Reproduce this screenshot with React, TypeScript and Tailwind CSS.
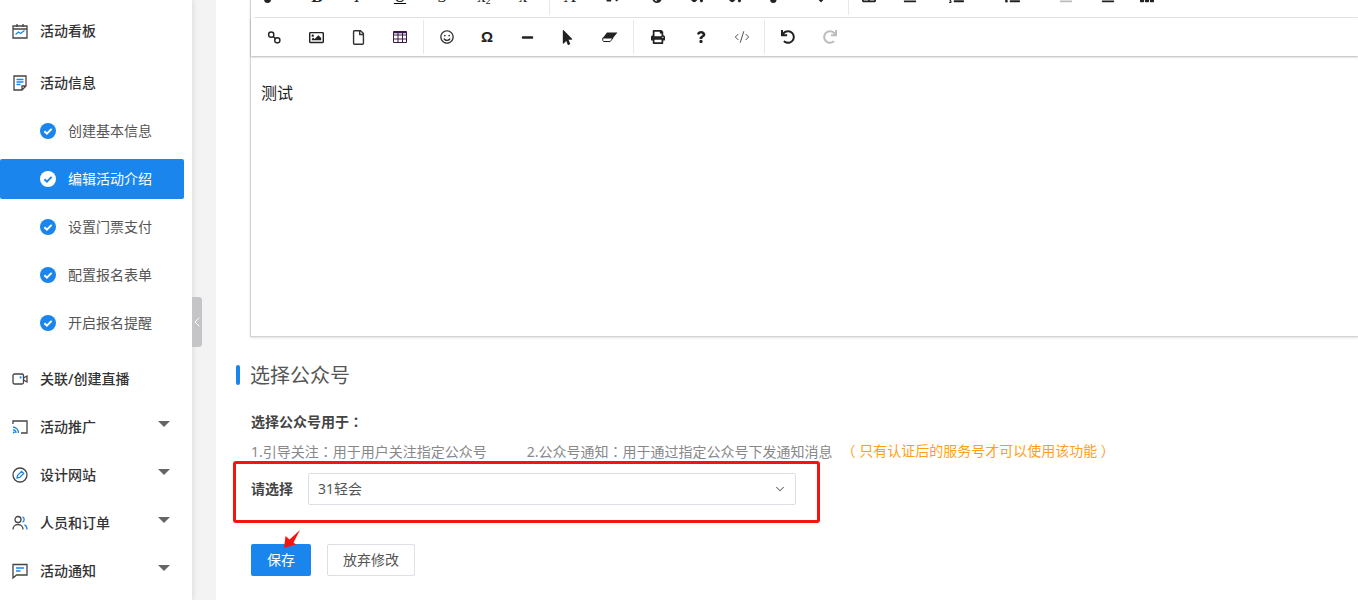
import { type ReactNode } from 'react'
import {
  FaAlignCenter,
  FaColumns,
  FaFillDrip,
  FaListOl,
  FaListUl,
  FaLongArrowAltDown,
  FaMinus,
  FaMousePointer,
  FaPaintBrush,
  FaPrint,
  FaQuestion,
  FaRedo,
  FaRegFile,
  FaRegImage,
  FaRegSmile,
  FaTextHeight,
  FaTh,
  FaTint,
  FaUndo,
} from 'react-icons/fa'
import { ChevronDown, ChevronLeft, CodeXml } from 'lucide-react'

const Colon = () => <span className="[font-family:'Noto_Sans_CJK_TC',sans-serif]">：</span>

function CheckDot({ active }: { active?: boolean }) {
  return (
    <svg width="16" height="16" viewBox="0 0 16 16" className="shrink-0">
      <circle cx="8" cy="8" r="8" fill={active ? '#fff' : '#1a86ed'} />
      <path d="M4.4 8.2l2.5 2.4 4.7-4.7" fill="none" stroke={active ? '#1a86ed' : '#fff'} strokeWidth="2" />
    </svg>
  )
}

const CalendarIcon = (
  <svg width="16" height="16" viewBox="0 0 16 16" fill="none">
    <path d="M1 3h14v12H1zM1 6h14M5 1v3M11 1v3" stroke="#444" strokeWidth="1.3" />
    <path d="M3.500 11.500l3-2.500 2 1.500 4-3" stroke="#1a86ed" strokeWidth="1.3" />
  </svg>
)
const DocIcon = (
  <svg width="16" height="16" viewBox="0 0 16 16" fill="none">
    <path d="M2 1h12v10l-4 4H2zM14 11h-4v4" stroke="#444" strokeWidth="1.3" />
    <path d="M4.500 4.500h7M4.500 7h7M4.500 9.500h4" stroke="#1a86ed" strokeWidth="1.3" />
  </svg>
)
const VideoIcon = (
  <svg width="16" height="16" viewBox="0 0 16 16" fill="none">
    <rect x="1" y="3" width="10.500" height="10" rx="1.500" stroke="#444" strokeWidth="1.3" />
    <path d="M11.500 7l3.500-2v6l-3.500-2" stroke="#444" strokeWidth="1.3" />
    <circle cx="8.600" cy="6.400" r="1.100" fill="#1a86ed" />
  </svg>
)
const CastIcon = (
  <svg width="16" height="16" viewBox="0 0 16 16" fill="none">
    <path d="M1 5V2h14v12H9" stroke="#444" strokeWidth="1.3" />
    <path d="M1 8a6 6 0 0 1 5.500 6M1 10.800a3.200 3.200 0 0 1 3 3.200" stroke="#1a86ed" strokeWidth="1.3" />
    <circle cx="1.800" cy="13.400" r="1" fill="#1a86ed" />
  </svg>
)
const DesignIcon = (
  <svg width="16" height="16" viewBox="0 0 16 16" fill="none">
    <circle cx="8" cy="8" r="7" stroke="#444" strokeWidth="1.3" />
    <path d="M5 11l.6-2.700 4-4 2.100 2.100-4 4z" stroke="#1a86ed" strokeWidth="1.3" />
  </svg>
)
const UsersIcon = (
  <svg width="16" height="16" viewBox="0 0 16 16" fill="none">
    <circle cx="6" cy="4.500" r="3" stroke="#444" strokeWidth="1.3" />
    <path d="M1 14.500c0-3 2.200-5 5-5s5 2 5 5" stroke="#444" strokeWidth="1.3" />
    <path d="M10.500 1.800a3 3 0 0 1 0 5.400M12.500 9.800c1.500.7 2.500 2.500 2.500 4.700" stroke="#1a86ed" strokeWidth="1.3" />
  </svg>
)
const MessageIcon = (
  <svg width="16" height="16" viewBox="0 0 16 16" fill="none">
    <path d="M1 1.500h14v10.500H4.500L1 15z" stroke="#444" strokeWidth="1.3" />
    <path d="M4 5h8M4 8h4.500" stroke="#1a86ed" strokeWidth="1.400" />
  </svg>
)

const Caret = (
  <svg width="12" height="6" viewBox="0 0 12 6" className="absolute left-[158px] top-[18px]">
    <path d="M0 0h12L6 6z" fill="#666" />
  </svg>
)

function TopItem({ icon, label, caret }: { icon: ReactNode; label: string; caret?: boolean }) {
  return (
    <div className="relative flex h-12 items-center pl-3 text-sm font-medium text-[#333]">
      <span className="flex w-7 shrink-0">{icon}</span>
      {label}
      {caret && Caret}
    </div>
  )
}

function SubItem({ label, active }: { label: string; active?: boolean }) {
  return (
    <div className="flex h-12 items-center">
      <div
        className={
          active
            ? 'flex h-10 w-[184px] items-center gap-3 rounded-[2px] bg-[#1a86ed] pl-10 text-sm text-white'
            : 'flex h-10 w-[184px] items-center gap-3 pl-10 text-sm text-[#555]'
        }
      >
        <CheckDot active={active} />
        {label}
      </div>
    </div>
  )
}

function Sidebar() {
  return (
    <aside className="relative z-10 h-full w-[192px] shrink-0 bg-white pt-[7px] shadow-[2px_0_4px_rgba(0,0,0,0.07)]">
      <TopItem icon={CalendarIcon} label="活动看板" />
      <div className="mt-1">
        <TopItem icon={DocIcon} label="活动信息" />
        <SubItem label="创建基本信息" />
        <SubItem label="编辑活动介绍" active />
        <SubItem label="设置门票支付" />
        <SubItem label="配置报名表单" />
        <SubItem label="开启报名提醒" />
      </div>
      <div className="mt-2">
        <TopItem icon={VideoIcon} label="关联/创建直播" />
        <TopItem icon={CastIcon} label="活动推广" caret />
        <TopItem icon={DesignIcon} label="设计网站" caret />
        <TopItem icon={UsersIcon} label="人员和订单" caret />
        <TopItem icon={MessageIcon} label="活动通知" caret />
      </div>
      {/* collapse handle */}
      <div className="absolute left-[192px] top-[297px] flex h-[50px] w-[10px] items-center justify-center rounded-r-[3px] bg-[#c5c5c7] text-white">
        <ChevronLeft size={16} strokeWidth={1.500} className="shrink-0" />
      </div>
    </aside>
  )
}

function Btn({ w, children, className }: { w: string; children: ReactNode; className?: string }) {
  return <div className={`flex shrink-0 items-center justify-center ${w} ${className ?? ''}`}>{children}</div>
}

const Serif = ({ children, italic, bold }: { children: ReactNode; italic?: boolean; bold?: boolean }) => (
  <span
    className={`[font-family:'Liberation_Serif',serif] text-[17px] leading-none text-[#222] ${italic ? 'italic' : ''} ${bold ? 'font-bold' : ''}`}
  >
    {children}
  </span>
)

function TopToolbarRow() {
  return (
    <div className="flex h-[17px] items-end overflow-hidden">
      {/* only the lower edge of this row is still on screen */}
      <div className="mb-[2px] flex h-[38px] shrink-0 items-center">
        <Btn w="w-[39px]" className="-translate-x-1"><FaPaintBrush size={14} color="#222" /></Btn>
        <Btn w="w-[46px]"><Serif bold>B</Serif></Btn>
        <Btn w="w-[34px]"><Serif italic>I</Serif></Btn>
        <Btn w="w-[52px]"><span className="underline"><Serif>U</Serif></span></Btn>
        <Btn w="w-[32px]"><Serif>S</Serif></Btn>
        <Btn w="w-[52px]"><Serif>x<sub className="text-[10px]">2</sub></Serif></Btn>
        <Btn w="w-[26px]"><Serif>x</Serif></Btn>
        <div className="ml-[13px] h-[38px] w-px bg-[#e8e8e8]" />
        <Btn w="w-[40px]"><Serif>A</Serif></Btn>
        <Btn w="w-[44px]"><FaTextHeight size={14} color="#222" /></Btn>
        <Btn w="w-[46px]"><FaTint size={14} color="#222" /></Btn>
        <Btn w="w-[32px]"><FaFillDrip size={14} color="#222" /></Btn>
        <Btn w="w-[44px]"><FaFillDrip size={14} color="#222" /></Btn>
        <Btn w="w-[40px]"><FaPaintBrush size={13} color="#222" /></Btn>
        <Btn w="w-[50px]"><FaLongArrowAltDown size={14} color="#222" /></Btn>
        <div className="ml-[2px] h-[38px] w-px bg-[#e8e8e8]" />
        <Btn w="w-[40px]"><FaColumns size={14} color="#222" /></Btn>
        <Btn w="w-[42px]"><FaAlignCenter size={14} color="#222" /></Btn>
        <Btn w="w-[50px]"><FaListOl size={15} color="#222" /></Btn>
        <Btn w="w-[62px]"><FaListUl size={15} color="#222" /></Btn>
        <Btn w="w-[46px]"><FaAlignCenter size={14} color="#bbb" /></Btn>
        <Btn w="w-[38px]"><FaAlignCenter size={14} color="#222" /></Btn>
        <Btn w="w-[40px]"><FaTh size={14} color="#222" /></Btn>
      </div>
    </div>
  )
}

const LinkIcon = (
  <svg width="15" height="15" viewBox="0 0 16 16" fill="none" stroke="#222" strokeWidth="1.500">
    <circle cx="4.500" cy="5" r="2.800" />
    <circle cx="11" cy="11" r="2.800" />
    <path d="M6.500 7l3 2.500" />
  </svg>
)
const TableIcon = (
  <svg width="14" height="12" viewBox="0 0 14 12" fill="none" stroke="#3a1a4a" strokeWidth="1">
    <path d="M.5.500h13v11H.5zM.5 4h13M.5 8h13M5 .500v11M9.500.500v11" />
    <path d="M.5 1.500h13" strokeWidth="1.500" />
  </svg>
)
const EraserIcon = (
  <svg width="16" height="10" viewBox="0 0 16 10" fill="none">
    <path d="M5 .5h10.500L11 6H.8z" fill="#222" />
    <path d="M.8 6H11v0l-2.800 3.500H1.500L.8 8.500z" fill="#fff" stroke="#222" strokeWidth="1" />
  </svg>
)

function BottomToolbarRow() {
  return (
    <div className="flex h-[38px] items-center pl-[2px] shadow-[0_1px_2px_rgba(0,0,0,0.3)]">
      <Btn w="w-[42px]">{LinkIcon}</Btn>
      <Btn w="w-[42px]"><FaRegImage size={15} color="#222" /></Btn>
      <Btn w="w-[42px]"><FaRegFile size={15} color="#333" /></Btn>
      <Btn w="w-[42px]">{TableIcon}</Btn>
      <div className="mx-[2px] h-[34px] w-px bg-[#e8e8e8]" />
      <Btn w="w-[41px]"><FaRegSmile size={14} color="#333" /></Btn>
      <Btn w="w-[40px]"><span className="[font-family:'Liberation_Sans',sans-serif] text-[15px] font-bold text-[#222]">Ω</span></Btn>
      <Btn w="w-[40px]"><FaMinus size={13} color="#222" /></Btn>
      <Btn w="w-[41px]"><FaMousePointer size={15} color="#222" /></Btn>
      <Btn w="w-[43px]">{EraserIcon}</Btn>
      <div className="mx-[2px] h-[34px] w-px bg-[#e8e8e8]" />
      <Btn w="w-[44px]"><FaPrint size={14} color="#222" /></Btn>
      <Btn w="w-[41px]"><FaQuestion size={12} color="#222" /></Btn>
      <Btn w="w-[41px]"><CodeXml size={16} strokeWidth={1.400} color="#444" /></Btn>
      <div className="mx-[2px] h-[34px] w-px bg-[#e8e8e8]" />
      <Btn w="w-[42px]"><FaUndo size={14} color="#222" /></Btn>
      <Btn w="w-[42px]"><FaRedo size={14} color="#bdbdbd" /></Btn>
    </div>
  )
}

function Editor() {
  return (
    <div className="ml-[34px] h-[337px] border-b border-l border-[#d4d4d4] shadow-[0_1px_2px_rgba(0,0,0,0.12)]">
      <div className="ml-1 border-b border-[#e8e8e8]">
        <TopToolbarRow />
      </div>
      <BottomToolbarRow />
      <div className="pl-[10px] pt-[25px] text-base leading-6 text-[#222]">测试</div>
    </div>
  )
}

function AccountSection() {
  return (
    <div className="pl-5">
      <div className="mt-7 flex h-5 items-center">
        <span className="h-5 w-1 rounded-[2px] bg-[#1a86ed]" />
        <h2 className="ml-[10px] pt-[2px] text-xl leading-5 text-[#555]">选择公众号</h2>
      </div>
      <div className="pl-[15px]">
        <p className="mt-[26px] text-sm font-bold leading-5 text-[#444]">
          选择公众号用于
          <Colon />
        </p>
        <div className="mt-[9px] flex text-sm leading-5 text-[#888]">
          <span>
            1.引导关注
            <Colon />
            用于用户关注指定公众号
          </span>
          <span className="ml-10">
            2.公众号通知
            <Colon />
            用于通过指定公众号下发通知消息
          </span>
          <span className="ml-[9px] text-[#ff9f1a]">（ 只有认证后的服务号才可以使用该功能 ）</span>
        </div>
        <div className="relative mt-[11px] flex items-center">
          <span className="w-[57px] text-sm font-bold text-[#444]">请选择</span>
          <div className="flex h-8 w-[488px] items-center justify-between rounded-[2px] border border-[#dcdfe6] pl-[9px] pr-2 text-sm text-[#555]">
            31轻会
            <ChevronDown size={14} strokeWidth={1.800} color="#666" />
          </div>
          {/* red annotation around the select */}
          <div className="absolute -left-[18px] -top-3 h-[62px] w-[587px] rounded-[3px] border-[3px] border-[#f5140f]" />
        </div>
        <div className="relative mt-[39px] flex gap-4">
          <div className="flex h-8 w-[60px] items-center justify-center rounded-[2px] bg-[#1a86ed] text-sm text-white">保存</div>
          <div className="flex h-8 w-[88px] items-center justify-center rounded-[2px] border border-[#dcdfe6] text-sm text-[#555]">放弃修改</div>
          {/* red arrow pointing at the save button */}
          <svg width="18" height="19" viewBox="0 0 18 19" className="absolute left-8 -top-[14px]">
            <polygon points="1,18 2.500,6 6.500,9.500 17,0 10.500,12.500 13,14.500" fill="#f5140f" />
          </svg>
        </div>
      </div>
    </div>
  )
}

export default function App() {
  return (
    <div className="flex h-[600px] w-full overflow-hidden bg-white [font-family:'Noto_Sans','Noto_Sans_CJK_SC',sans-serif]">
      <Sidebar />
      <div className="h-full w-6 shrink-0 bg-[#f3f3f4]" />
      <main className="min-w-0 flex-1">
        <Editor />
        <AccountSection />
      </main>
    </div>
  )
}
